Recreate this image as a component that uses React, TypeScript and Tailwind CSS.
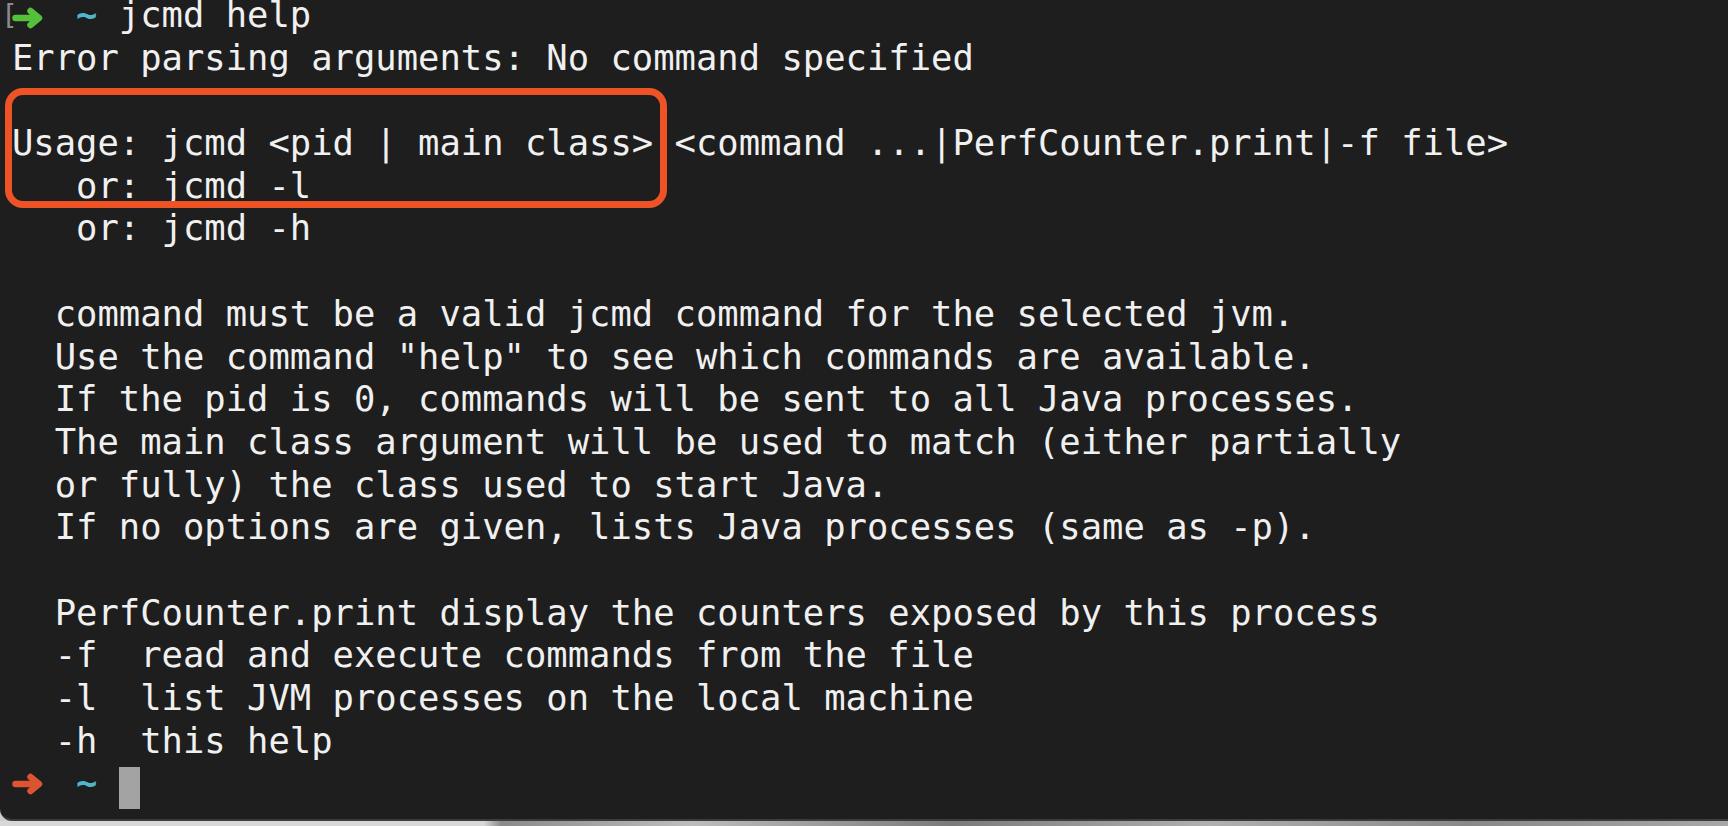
import React from "react";

const Arrow = ({ color }: { color: string }) => (
  <svg width="32" height="22" viewBox="0 0 32 22" className="block shrink-0">
    <path
      d="M3.5 11 H26 M18.5 4 L27 11 L18.5 18"
      fill="none"
      stroke={color}
      strokeWidth="6.5"
      strokeLinecap="round"
      strokeLinejoin="round"
    />
  </svg>
);

const Prompt = ({
  color,
  first,
  children,
}: {
  color: string;
  first?: boolean;
  children?: React.ReactNode;
}) => (
  <div
    className={
      first
        ? "flex items-start h-[36.7px] leading-[30px]"
        : "flex items-center h-[42.7px]"
    }
  >
    <span className={first ? "w-[21.37px] shrink-0 flex items-center h-[30px] pt-[6px]" : "w-[21.37px] shrink-0 flex items-center"}>
      <Arrow color={color} />
    </span>
    <span>  </span>
    <span className="text-[#4fb7cc] font-bold">~</span>
    <span> </span>
    {children}
  </div>
);

export default function App() {
  const lines = [
    "Error parsing arguments: No command specified",
    "",
    "Usage: jcmd <pid | main class> <command ...|PerfCounter.print|-f file>",
    "   or: jcmd -l",
    "   or: jcmd -h",
    "",
    "  command must be a valid jcmd command for the selected jvm.",
    "  Use the command \"help\" to see which commands are available.",
    "  If the pid is 0, commands will be sent to all Java processes.",
    "  The main class argument will be used to match (either partially",
    "  or fully) the class used to start Java.",
    "  If no options are given, lists Java processes (same as -p).",
    "",
    "  PerfCounter.print display the counters exposed by this process",
    "  -f  read and execute commands from the file",
    "  -l  list JVM processes on the local machine",
    "  -h  this help",
  ];
  return (
    <div className="w-[1728px] h-[826px] bg-[#cfcfcf] overflow-hidden relative">
      <div className="h-[821px] bg-[#1e1e1e] rounded-bl-[12px] border-b-2 border-[#3c3c3c] relative overflow-hidden">
        <span className="absolute left-[1px] top-[2px] text-[#8a8a8a] font-['DejaVu_Sans_Mono',monospace] text-[28px] leading-[28px]">
          [
        </span>
        <div className="pl-[12px] font-['DejaVu_Sans_Mono',monospace] text-[35.5px] leading-[42.7px] text-[#f0f0f0] whitespace-pre">
          <Prompt color="#55c13b" first>
            <span>jcmd help</span>
          </Prompt>
          {lines.map((l, i) => (
            <div key={i} className="h-[42.7px]">
              {l}
            </div>
          ))}
          <Prompt color="#dc5430">
            <span className="inline-block w-[21px] h-[42px] bg-[#a3a3a3] mt-[8px]" />
          </Prompt>
        </div>
        <div className="absolute left-[5px] top-[88px] w-[662px] h-[120px] border-[7px] border-[#ee5326] rounded-[18px]" />
      </div>
      <div className="h-[5px] bg-[linear-gradient(90deg,#d8d8d8_0%,#d8d8d8_28%,#8a8a8a_29%,#bdbdbd_40%,#7a7a7a_55%,#b0b0b0_70%,#888888_85%,#a8a8a8_100%)]" />
    </div>
  );
}
